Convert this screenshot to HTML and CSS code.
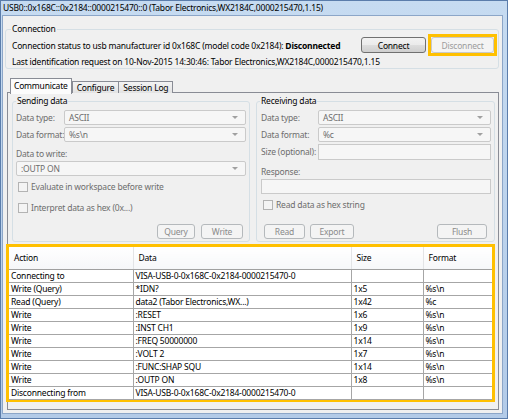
FILE: index.html
```html
<!DOCTYPE html>
<html>
<head>
<meta charset="utf-8">
<title>Connection</title>
<link rel="stylesheet" href="styles.css">
</head>
<body>
<div class="window">
  <div class="titlebar">USB0::0x168C::0x2184::0000215470::0 (Tabor Electronics,WX2184C,0000215470,1.15)</div>
  <div class="client">
    <fieldset class="group conn">
      <legend>Connection</legend>
      <div class="status-row">
        <span class="status">Connection status to usb manufacturer id 0x168C (model code 0x2184): <b>Disconnected</b></span>
        <button class="btn btn-on btn-connect">Connect</button>
        <span class="mark mark-btn"><button class="btn btn-disconnect" disabled>Disconnect</button></span>
      </div>
      <div class="ident">Last identification request on 10-Nov-2015 14:30:46: Tabor Electronics,WX2184C,0000215470,1.15</div>
    </fieldset>

    <div class="tabs">
      <div class="tab active">Communicate</div>
      <div class="tab">Configure</div>
      <div class="tab">Session Log</div>
    </div>

    <div class="panel">
      <div class="io">
        <fieldset class="group send">
          <legend>Sending data</legend>
          <div class="form">
            <span class="lbl">Data type:</span>
            <div class="combo">ASCII</div>
            <span class="lbl">Data format:</span>
            <div class="combo">%s\n</div>
          </div>
          <div class="lbl block-lbl">Data to write:</div>
          <div class="combo wide">:OUTP ON</div>
          <div class="check first"><span class="cb"></span><span class="lbl">Evaluate in workspace before write</span></div>
          <div class="check second"><span class="cb"></span><span class="lbl">Interpret data as hex (0x...)</span></div>
          <div class="btn-row send-btns">
            <button class="btn w-query" disabled>Query</button>
            <button class="btn w-write" disabled>Write</button>
          </div>
        </fieldset>

        <fieldset class="group recv">
          <legend>Receiving data</legend>
          <div class="form recv-form">
            <span class="lbl">Data type:</span>
            <div class="combo">ASCII</div>
            <span class="lbl">Data format:</span>
            <div class="combo">%c</div>
            <span class="lbl">Size (optional):</span>
            <div class="field tall"></div>
          </div>
          <div class="lbl block-lbl resp-lbl">Response:</div>
          <div class="field resp"></div>
          <div class="check recv-check"><span class="cb"></span><span class="lbl">Read data as hex string</span></div>
          <div class="btn-row recv-btns">
            <button class="btn w-read" disabled>Read</button>
            <button class="btn w-export" disabled>Export</button>
            <span class="spacer"></span>
            <button class="btn w-flush" disabled>Flush</button>
          </div>
        </fieldset>
      </div>

      <div class="mark log">
        <table class="log-table">
          <colgroup>
            <col class="c-action"><col class="c-data"><col class="c-size"><col class="c-format">
          </colgroup>
          <thead>
            <tr><th>Action</th><th>Data</th><th>Size</th><th>Format</th></tr>
          </thead>
          <tbody>
            <tr><td>Connecting to</td><td>VISA-USB-0-0x168C-0x2184-0000215470-0</td><td></td><td></td></tr>
            <tr><td>Write (Query)</td><td>*IDN?</td><td>1x5</td><td>%s\n</td></tr>
            <tr><td>Read (Query)</td><td>data2 (Tabor Electronics,WX...)</td><td>1x42</td><td>%c</td></tr>
            <tr><td>Write</td><td>:RESET</td><td>1x6</td><td>%s\n</td></tr>
            <tr><td>Write</td><td>:INST CH1</td><td>1x9</td><td>%s\n</td></tr>
            <tr><td>Write</td><td>:FREQ 50000000</td><td>1x14</td><td>%s\n</td></tr>
            <tr><td>Write</td><td>:VOLT 2</td><td>1x7</td><td>%s\n</td></tr>
            <tr><td>Write</td><td>:FUNC:SHAP SQU</td><td>1x14</td><td>%s\n</td></tr>
            <tr><td>Write</td><td>:OUTP ON</td><td>1x8</td><td>%s\n</td></tr>
            <tr><td>Disconnecting from</td><td>VISA-USB-0-0x168C-0x2184-0000215470-0</td><td></td><td></td></tr>
          </tbody>
        </table>
      </div>
    </div>
  </div>
</div>
</body>
</html>
```

FILE: styles.css
```css
* { box-sizing: border-box; }
html, body { margin: 0; padding: 0; }
body {
  width: 508px;
  height: 419px;
  overflow: hidden;
  font-family: "Noto Sans", "Open Sans", sans-serif;
  font-size: 8.5px;
  letter-spacing: -0.2px;
  color: #000;
  background: #fff;
}

.window {
  width: 508px;
  height: 419px;
  display: flex;
  flex-direction: column;
  background: linear-gradient(#c6dbf1, #b3cbe8);
  border: 1px solid #5b7dab;
  padding: 0 5px 5px 2px;
}

.titlebar {
  height: 15px;
  line-height: 14px;
  white-space: nowrap;
  overflow: hidden;
  color: #000;
}

.client {
  flex: 1;
  display: flex;
  flex-direction: column;
  background: #f0f0f0;
  box-shadow: 0 0 0 1px #8ca6c8;
}

/* group boxes */
.group {
  margin: 0;
  border: 1px solid #d5dfe5;
  border-radius: 3px;
  min-width: 0;
}
.group legend {
  padding: 0 1px;
  margin-left: -1px;
  line-height: 12px;
  color: #000;
}

.conn {
  margin: 7px 3px 0 2px;
  padding: 2px 1px 0 6px;
}
.status-row {
  display: flex;
  align-items: center;
  height: 16px;
}
.status { flex: 1; white-space: nowrap; }
.ident { margin-top: 3px; line-height: 12px; white-space: nowrap; }

/* buttons */
.btn {
  font: inherit;
  letter-spacing: inherit;
  height: 15px;
  padding: 0;
  line-height: 13px;
  border: 1px solid #b5b9bc;
  border-radius: 3px;
  background: #f4f4f4;
  color: #8a8a8a;
}
.btn-on {
  border-color: #707070;
  color: #000;
  background: linear-gradient(#f2f2f2 0%, #ebebeb 48%, #dddddd 52%, #cfcfcf 100%);
}
.btn-connect { width: 65px; height: 16px; margin-right: 2px; }
.btn-disconnect { width: 63px; height: 16px; display: block; border-color: #c9c9c9; color: #9c9c9c; }

.mark { border: 3px solid #ffc000; }
.mark-btn { margin: -3px 0; display: block; }

/* tabs */
.tabs {
  display: flex;
  align-items: flex-end;
  height: 15px;
  margin: 9px 0 0 7px;
  position: relative;
  z-index: 1;
}
.tab {
  height: 12px;
  line-height: 11px;
  padding: 0 4px;
  border: 1px solid #898c95;
  border-bottom: none;
  margin-left: -1px;
  background: linear-gradient(#f3f3f3, #e3e3e3);
  white-space: nowrap;
}
.tab.active {
  height: 16px;
  line-height: 14px;
  margin-left: 0;
  margin-bottom: -1px;
  padding: 0 3px;
  background: #fcfcfc;
  margin-right: 1px;
}

.panel {
  flex: 1;
  display: flex;
  flex-direction: column;
  margin: -1px 3px 3px 4px;
  border: 1px solid #898c95;
  padding-top: 2px;
  background: #f0f0f0;
}

.io {
  display: flex;
  gap: 6px;
  padding: 0 3px 0 4px;
}
.send { width: 238px; flex: none; padding: 3px 3px 2px 3px; }
.recv { flex: 1; padding: 3px 3px 2px 4px; }
.send legend { margin-left: 0; }

.lbl { color: #6d6d6d; white-space: nowrap; line-height: 12px; }

.form {
  display: grid;
  grid-template-columns: 48px 1fr;
  row-gap: 2px;
  align-items: center;
}
.recv-form { grid-template-columns: 57px 1fr; }

.combo {
  height: 15px;
  border: 1px solid #cacaca;
  border-radius: 2px;
  background: #f6f6f6;
  color: #6d6d6d;
  display: flex;
  align-items: center;
  padding-left: 4px;
  white-space: nowrap;
}
.combo::after {
  content: "";
  margin-left: auto;
  margin-right: 7px;
  border-left: 3px solid transparent;
  border-right: 3px solid transparent;
  border-top: 3px solid #a0a0a0;
}
.field {
  height: 15px;
  border: 1px solid #cacaca;
  background: #f6f6f6;
}
.field.tall { height: 16px; }

.block-lbl { margin-top: 6px; }
.combo.wide { margin-top: 1px; }
.resp { margin-top: 1px; }

.check { display: flex; align-items: center; height: 12px; }
.cb {
  width: 10px;
  height: 10px;
  border: 1px solid #b3b3b3;
  background: #f4f4f4;
  margin: 0 3px 0 2px;
  flex: none;
}
.check.first { margin-top: 5px; }
.check.second { margin-top: 9px; }
.recv-check { margin-top: 5px; }

.btn-row { display: flex; gap: 6px; }
.send-btns { justify-content: flex-end; margin-top: 10px; padding-right: 3px; }
.recv-btns { margin-top: 13px; padding: 0 4px 0 3px; gap: 5px; }
.spacer { flex: 1; }
.w-query { width: 38px; }
.w-write { width: 42px; }
.w-read { width: 41px; }
.w-export { width: 44px; }
.w-flush { width: 50px; }

/* log table */
.log {
  margin: 2px 3px 0 -2px;
  height: 158px;
}
.log-table {
  width: 483px;
  table-layout: fixed;
  border-collapse: collapse;
  background: #fff;
}
.c-action { width: 124px; }
.c-data { width: 218px; }
.c-size { width: 72px; }
.c-format { width: 69px; }
.log-table th {
  height: 22px;
  padding: 0 5px;
  text-align: left;
  font-weight: normal;
  background: linear-gradient(#ffffff, #f6f7f9);
  border-right: 1px solid #e3e4e6;
  border-bottom: 1px solid #a0a0a0;
  white-space: nowrap;
}
.log-table th:last-child { border-right: none; }
.log-table td {
  height: 13px;
  padding: 0 2px;
  line-height: 11px;
  border: 1px solid #a6a6a6;
  white-space: nowrap;
  overflow: hidden;
}
.log-table td:first-child { border-left: none; }
.log-table td:last-child { border-right: none; }
```
